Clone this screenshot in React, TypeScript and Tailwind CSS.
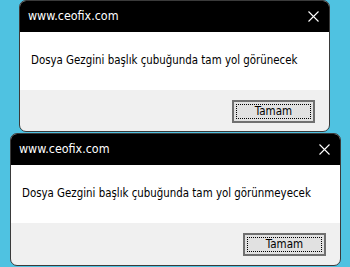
import React from "react";

function CloseIcon() {
  return (
    <svg width="11" height="11" viewBox="0 0 11 11" className="block">
      <path d="M0.5 0.5 L10.5 10.5 M10.5 0.5 L0.5 10.5" stroke="#fff" strokeWidth="1.1" fill="none" />
    </svg>
  );
}

function Dialog({
  message,
  className,
}: {
  message: string;
  className: string;
}) {
  return (
    <div className={`flex flex-col overflow-hidden rounded-[7px] border border-[#3a3a3a] bg-[#f0f0f0] ${className}`}>
      <div className="flex h-[31px] shrink-0 items-center justify-between bg-black pl-[8px] pr-[10px]">
        <span className="text-[12.4px] text-white">www.ceofix.com</span>
        <CloseIcon />
      </div>
      <div className="flex h-[58px] shrink-0 items-center bg-white pl-[11px] text-[11.4px] text-black">
        {message}
      </div>
      <div className="flex flex-1 items-start justify-end pr-[14px] pt-[10px]">
        <button className="flex h-[23px] w-[83px] items-center justify-center border-2 border-[#707070] bg-[#e1e1e1] p-[2px]">
          <span className="flex h-full w-full items-center justify-center border border-dotted border-black text-[11.5px] leading-none text-black">
            Tamam
          </span>
        </button>
      </div>
    </div>
  );
}

export default function App() {
  return (
    <div
      className="flex h-[267px] w-[350px] flex-col bg-[#4fc2e1]"
      style={{ fontFamily: '"DejaVu Sans Condensed", "DejaVu Sans", sans-serif' }}
    >
      <Dialog
        message="Dosya Gezgini başlık çubuğunda tam yol görünecek"
        className="ml-[19px] h-[132px] w-[311px]"
      />
      <Dialog
        message="Dosya Gezgini başlık çubuğunda tam yol görünmeyecek"
        className="ml-[10px] mt-[1px] h-[133px] w-[331px]"
      />
    </div>
  );
}
